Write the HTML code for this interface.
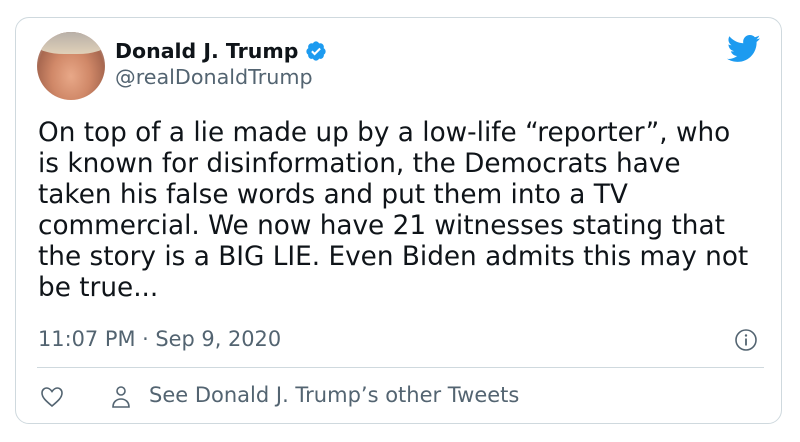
<!DOCTYPE html>
<html><head><meta charset="utf-8"><style>
html,body{margin:0;padding:0;background:#fff;width:800px;height:442px;overflow:hidden;font-family:"DejaVu Sans","Liberation Sans",sans-serif;}
.card{position:absolute;left:15px;top:17px;width:767px;height:407px;border:1px solid #cfd9de;border-radius:14px;box-sizing:border-box;}
.av{position:absolute;left:37px;top:32px;width:68px;height:68px;border-radius:50%;overflow:hidden;background:radial-gradient(ellipse at 50% 65%,#e8a888 0%,#d08868 40%,#a86850 70%,#c8dcea 100%);}
.hair{position:absolute;left:0;top:0;width:68px;height:22px;background:linear-gradient(#b8b0a8,#e0d0b8);border-radius:0 0 40% 40%;}
.name{position:absolute;left:115px;top:39px;font-weight:bold;font-size:20.5px;color:#0f1419;}
.handle{position:absolute;left:115px;top:65px;font-size:20.7px;color:#536471;}
.text{position:absolute;left:38px;top:118px;font-size:26.3px;line-height:31px;color:#0f1419;white-space:pre;}
.time{position:absolute;left:38px;top:327px;font-size:20.9px;color:#536471;}
.div{position:absolute;left:37px;top:367px;width:727px;height:1px;background:#cfd9de;}
.see{position:absolute;left:149px;top:383px;font-size:21px;color:#536471;}
</style></head><body>
<div class="card"></div>
<div class="av"><div class="hair"></div></div>
<div class="name">Donald J. Trump</div>
<svg style="position:absolute;left:305px;top:40px" width="22" height="22" viewBox="0 0 24 24"><path fill="#1d9bf0" d="M22.5 12.5c0-1.58-.88-2.950-2.16-3.6.15-.44.23-.91.23-1.4 0-2.21-1.710-4-3.830-4-.47 0-.92.08-1.34.25C14.77 2.52 13.5 1.5 12 1.5s-2.770 1.020-3.4 2.25c-.41-.17-.87-.25-1.34-.25-2.12 0-3.83 1.79-3.83 4 0 .49.08.96.23 1.4C2.38 9.55 1.5 10.92 1.5 12.5c0 1.5.79 2.8 1.96 3.5-.03.2-.05.4-.05.6 0 2.21 1.71 4 3.83 4 .47 0 .93-.08 1.35-.25.63 1.23 1.9 2.15 3.41 2.15s2.78-.92 3.41-2.15c.42.17.88.25 1.35.25 2.12 0 3.83-1.79 3.83-4 0-.2-.02-.4-.05-.6 1.17-.7 1.96-2 1.96-3.5z"/><path fill="none" stroke="#fff" stroke-width="2.2" d="M7.5 12.3l3 3 6-6"/></svg>
<div class="handle">@realDonaldTrump</div>
<svg style="position:absolute;left:727px;top:35px" width="34" height="28" viewBox="0 0 24 20"><path fill="#1d9bf0" d="M23.6 2.3c-.9.4-1.8.6-2.8.8 1-.6 1.8-1.6 2.1-2.7-.9.6-2 1-3.1 1.2C18.9.6 17.6 0 16.2 0c-2.7 0-4.8 2.2-4.8 4.8 0 .4 0 .8.1 1.1C7.4 5.7 3.9 3.8 1.6.9c-.4.7-.7 1.6-.7 2.4 0 1.7.9 3.2 2.2 4-.8 0-1.5-.2-2.2-.6v.1c0 2.3 1.7 4.3 3.9 4.7-.4.1-.8.2-1.3.2-.3 0-.6 0-.9-.1.6 1.9 2.4 3.3 4.5 3.4-1.7 1.3-3.7 2.1-6 2.1-.4 0-.8 0-1.2-.1 2.1 1.4 4.7 2.2 7.4 2.2 8.9 0 13.7-7.4 13.7-13.7v-.6c1-.7 1.8-1.5 2.4-2.5z"/></svg>
<div class="text">On top of a lie made up by a low-life “reporter”, who
is known for disinformation, the Democrats have
taken his false words and put them into a TV
commercial. We now have 21 witnesses stating that
the story is a BIG LIE. Even Biden admits this may not
be true...</div>
<div class="time">11:07 PM · Sep 9, 2020</div>
<svg style="position:absolute;left:734px;top:328px" width="24" height="24" viewBox="0 0 24 24"><circle cx="12" cy="12" r="10" fill="none" stroke="#536471" stroke-width="1.6"/><circle cx="12" cy="7.5" r="1.2" fill="#536471"/><path d="M12 10.5v7" stroke="#536471" stroke-width="1.8"/></svg>
<div class="div"></div>
<svg style="position:absolute;left:40px;top:386px" width="24" height="22" viewBox="0 0 24 22"><path fill="none" stroke="#536471" stroke-width="1.6" d="M12 20C6 15 2 11.5 2 7c0-3 2.2-5 4.8-5 2.2 0 3.6 1.3 5.2 3.5C13.6 3.3 15 2 17.2 2 19.8 2 22 4 22 7c0 4.5-4 8-10 13z"/></svg>
<svg style="position:absolute;left:110px;top:384px" width="22" height="26" viewBox="0 0 22 26"><circle cx="11" cy="7" r="4" fill="none" stroke="#536471" stroke-width="1.6"/><path fill="none" stroke="#536471" stroke-width="1.6" d="M3 23c0-5 3.5-8 8-8s8 3 8 8z"/></svg>
<div class="see">See Donald J. Trump’s other Tweets</div>
</body></html>
